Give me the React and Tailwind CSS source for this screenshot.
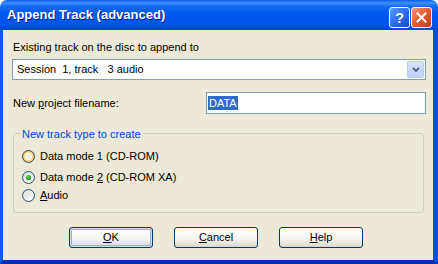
import React, { useState } from "react";

const font = { fontFamily: '"Liberation Sans", Arial, sans-serif' };

// XP style radio drawn as svg
const Radio = ({ checked, hot }) => (
  <svg width="13" height="13" viewBox="0 0 13 13">
    <defs>
      <linearGradient id="rb" x1="0" y1="0" x2="1" y2="1">
        <stop offset="0" stopColor="#DCD9CF" />
        <stop offset="1" stopColor="#FFFFFF" />
      </linearGradient>
      <radialGradient id="hot" cx="0.5" cy="0.5" r="0.5">
        <stop offset="0.45" stopColor="#FFF3CF" />
        <stop offset="1" stopColor="#F8B330" />
      </radialGradient>
      <radialGradient id="dot" cx="0.4" cy="0.35" r="0.6">
        <stop offset="0" stopColor="#5AE35A" />
        <stop offset="1" stopColor="#1E9A1E" />
      </radialGradient>
    </defs>
    <circle cx="6.5" cy="6.5" r="6" fill={hot ? "url(#hot)" : "url(#rb)"} stroke="#1C5180" strokeWidth="1" />
    {hot && <circle cx="6.5" cy="6.5" r="3.6" fill="#F4F1E4" />}
    {checked && <circle cx="6.5" cy="6.5" r="2.6" fill="url(#dot)" />}
  </svg>
);

const Btn = ({ children, def }) => (
  <button
    className={
      "w-[84px] h-[21px] rounded-[3px] border border-[#003C74] bg-[linear-gradient(to_bottom,#FFFFFF,#F3F3EE_60%,#DCD7CC)] text-[11px] text-black flex items-center justify-center " +
      (def ? "shadow-[inset_0_0_0_1px_#CEDDFA,inset_0_0_0_2px_#8FB0EA]" : "")
    }
  >
    {children}
  </button>
);

export default function App() {
  const [mode, setMode] = useState(2);
  const options = [
    { id: 1, label: <>Data mode 1 (CD-ROM)</>, hot: true },
    { id: 2, label: <>Data mode <u>2</u> (CD-ROM XA)</> },
    { id: 3, label: <><u>A</u>udio</> },
  ];

  return (
    <div style={font} className="w-[438px] h-[264px] flex flex-col bg-white select-none">
      {/* title bar */}
      <div className="h-[30px] shrink-0 rounded-t-[7px] bg-[linear-gradient(to_bottom,#0A5AE6_0%,#3D92FF_10%,#1169F2_22%,#0058EE_45%,#0055EB_80%,#0048D8_100%)] flex items-center pl-[7px] pr-[6px]">
        <span className="flex-1 text-white font-bold text-[13px] [text-shadow:1px_1px_#0A1A8C]">
          Append Track (advanced)
        </span>
        <div className="flex gap-[1px] mt-[5px]">
          <div className="w-[21px] h-[21px] rounded-[3px] border border-white bg-[linear-gradient(135deg,#5F9BFF,#2663E8_60%,#1A4FC8)] flex items-center justify-center text-white font-bold text-[15px] leading-none">
            ?
          </div>
          <div className="w-[21px] h-[21px] rounded-[3px] border border-white bg-[linear-gradient(135deg,#F39A7A,#E0542A_55%,#C7401D)] flex items-center justify-center">
            <svg width="11" height="11" viewBox="0 0 11 11">
              <path d="M1.5 1.5 L9.5 9.5 M9.5 1.5 L1.5 9.5" stroke="white" strokeWidth="2" strokeLinecap="square" />
            </svg>
          </div>
        </div>
      </div>

      {/* body */}
      <div className="flex-1 bg-[#ECE9D8] border-l-[3px] border-r-[5px] border-b-[4px] border-l-[#0A5EE6] border-r-[#0A4FD8] border-b-[#0A2FB0] pl-[9px] pr-[7px] pt-[10px] flex flex-col text-[11px] text-black">
        <div className="h-[14px] leading-[14px] pl-[1px]">Existing track on the disc to append to</div>

        <div className="mt-[5px] h-[21px] bg-white border border-[#7F9DB9] flex items-center">
          <span className="flex-1 pl-[4px] whitespace-pre">Session  1, track   3 audio</span>
          <div className="w-[17px] h-[17px] mr-[1px] rounded-[2px] border border-[#B9CCF5] bg-[linear-gradient(to_bottom,#D8E4FD,#BCD0F9)] flex items-center justify-center">
            <svg width="8" height="5" viewBox="0 0 8 5">
              <path d="M1 1 L4 4 L7 1" stroke="#4D6185" strokeWidth="1.8" fill="none" />
            </svg>
          </div>
        </div>

        <div className="mt-[12px] flex items-center justify-between">
          <span className="pl-[1px]">
            New <u>p</u>roject filename:
          </span>
          <div className="w-[220px] h-[22px] bg-white border border-[#7F9DB9] flex items-center pl-[1px]">
            <span className="bg-[#316AC5] text-white px-[1px] leading-[14px]">DATA</span>
          </div>
        </div>

        <div className="relative mt-[19px] ml-[1px] mr-[2px] h-[80px] border border-[#D0D0BF] rounded-[3px] pt-[15px] pl-[8px]">
          <span className="absolute -top-[8px] left-[6px] px-[2px] bg-[#ECE9D8] text-[#0046D5]">
            New track type to create
          </span>
          {options.map((o) => (
            <div
              key={o.id}
              onClick={() => setMode(o.id)}
              className={"flex items-center gap-[5px] h-[14px] " + (o.id === 2 ? "mt-[7px]" : o.id === 3 ? "mt-[4px]" : "")}
            >
              <Radio checked={mode === o.id} hot={o.hot} />
              <span>{o.label}</span>
            </div>
          ))}
        </div>

        <div className="mt-[14px] flex gap-[21px] pl-[57px]">
          <Btn def>
            <u>O</u>K
          </Btn>
          <Btn>
            <u>C</u>ancel
          </Btn>
          <Btn>
            <u>H</u>elp
          </Btn>
        </div>
      </div>
    </div>
  );
}
